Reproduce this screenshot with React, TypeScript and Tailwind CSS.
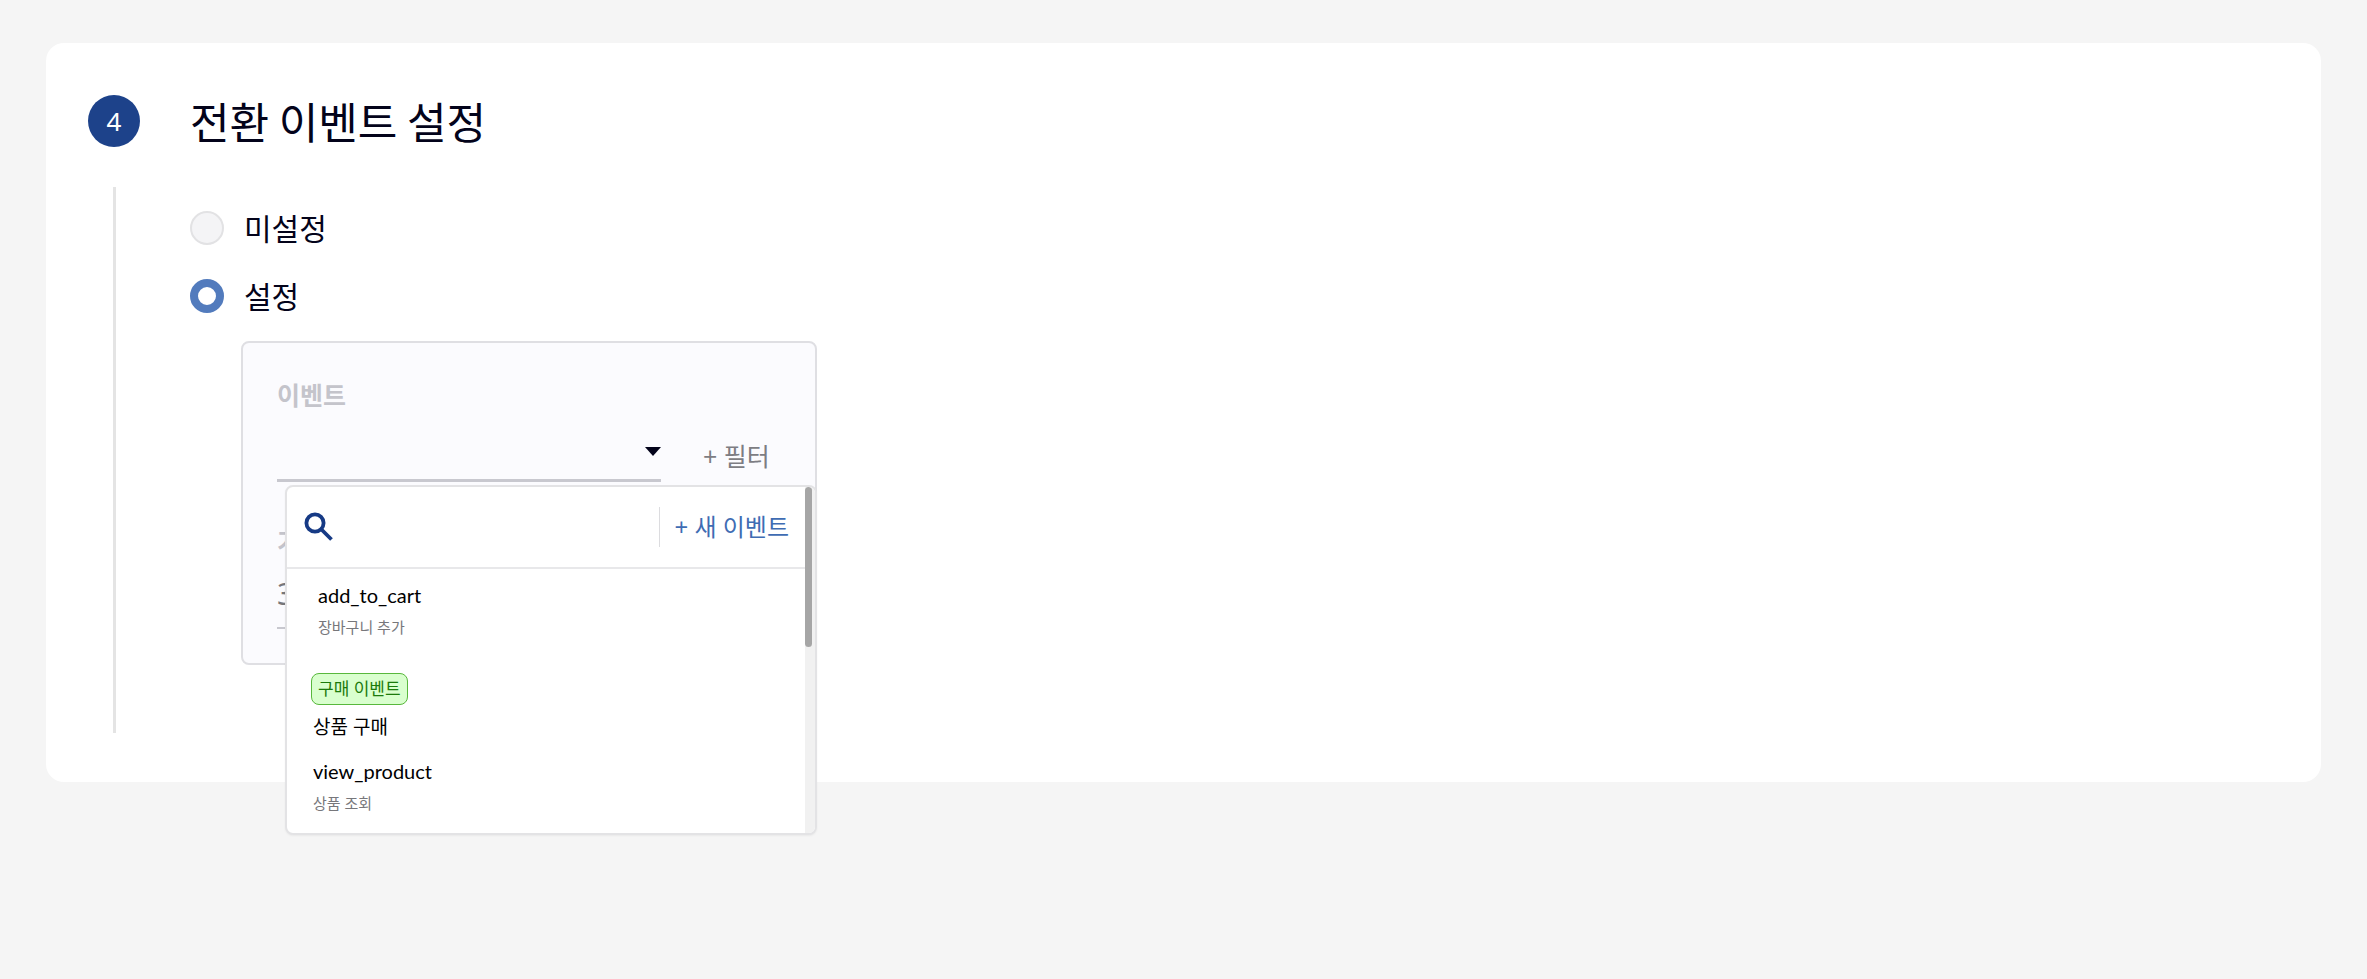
import { useState } from "react";

type EventItem = {
  name: string;
  description?: string;
  badge?: string;
};

const events: EventItem[] = [
  { name: "add_to_cart", description: "장바구니 추가" },
  { name: "상품 구매", badge: "구매 이벤트" },
  { name: "view_product", description: "상품 조회" },
];

const radioClass =
  "size-[34px] shrink-0 appearance-none rounded-full border-2 border-[#e2e2e4] bg-[#f4f4f6] checked:border-8 checked:border-[#527bbd] checked:bg-white";

const nameClass =
  "font-[Lato,'Noto_Sans_CJK_KR',sans-serif] text-[20px] leading-7 text-black";

function EventRow({ item, indent }: { item: EventItem; indent: boolean }) {
  if (item.badge) {
    return (
      <button type="button" className="flex flex-col items-start px-6 pt-[32px] text-left">
        <span className="flex h-8 items-center rounded-lg border border-[#58b83c] bg-[#d9ffce] px-[6px] text-[17px] text-[#1c7a0b]">
          {item.badge}
        </span>
        <span className="mt-2 pl-[2px] text-[19px] leading-7 text-black">{item.name}</span>
      </button>
    );
  }

  return (
    <button
      type="button"
      className={`flex flex-col items-start pr-6 text-left ${indent ? "pt-3 pl-[31px]" : "pt-4 pl-[26px]"}`}
    >
      <span className={nameClass}>{item.name}</span>
      <span className="mt-1 text-[15px] leading-7 text-[#77777b]">{item.description}</span>
    </button>
  );
}

function EventDropdown() {
  return (
    <div className="absolute top-[142px] -right-[2px] left-[42px] z-10 flex h-[350px] overflow-hidden rounded-lg border-2 border-[#e3e3e5] bg-white shadow-xs">
      <div className="flex min-w-0 flex-1 flex-col">
        {/* SEARCH */}
        <div className="flex h-[82px] shrink-0 items-center border-b-2 border-[#e8e8ea] pl-4">
          <label htmlFor="event-search" className="shrink-0">
            <svg width="32" height="32" viewBox="0 0 32 32" fill="none" stroke="#163a85" strokeWidth="3.8">
              <circle cx="12" cy="12" r="8.6" />
              <path d="M18 18 28.5 28.5" />
            </svg>
          </label>
          <input
            id="event-search"
            type="text"
            aria-label="이벤트 검색"
            className="h-10 min-w-0 flex-1 px-2 text-xl outline-none"
          />
          <button
            type="button"
            className="flex h-10 shrink-0 items-center border-l border-[#dcdcdf] pr-4 pl-[14px] text-2xl whitespace-nowrap text-[#3f6cb3]"
          >
            + 새 이벤트
          </button>
        </div>

        {/* LIST */}
        <div className="flex flex-col">
          {events.map((item, i) => (
            <EventRow key={item.name} item={item} indent={i === 0} />
          ))}
        </div>
      </div>

      {/* SCROLLBAR */}
      <div className="w-[10px] shrink-0 bg-[#f1f1f1]">
        <div className="h-[160px] w-[7px] rounded-full bg-[#a6a6a6]" />
      </div>
    </div>
  );
}

export default function App() {
  const [mode, setMode] = useState("set");

  return (
    <main className="min-h-screen bg-[#f5f5f5] px-[46px] pt-[43px] font-['Noto_Sans','Noto_Sans_CJK_KR',sans-serif] text-[#03031a]">
      <section className="flex gap-[50px] rounded-[18px] bg-white pt-[52px] pb-[49px] pl-[42px]">
        {/* STEP */}
        <div className="flex flex-col items-center gap-10">
          <span className="flex size-[52px] items-center justify-center rounded-full bg-[#1d428a] text-[26px] text-white">
            4
          </span>
          <div className="w-[3px] flex-1 bg-[#e4e4e4]" />
        </div>

        <div className="pb-[68px]">
          <h2 className="font-['Noto_Sans_CJK_KR',sans-serif] text-[43px] leading-[50px]">전환 이벤트 설정</h2>

          {/* MODE */}
          <div className="mt-[58px] flex flex-col gap-[18px]">
            <label className="flex h-[50px] items-center gap-5 text-[30px]">
              <input
                type="radio"
                name="mode"
                className={radioClass}
                checked={mode === "unset"}
                onChange={() => setMode("unset")}
              />
              미설정
            </label>
            <label className="flex h-[50px] items-center gap-5 text-[30px]">
              <input
                type="radio"
                name="mode"
                className={radioClass}
                checked={mode === "set"}
                onChange={() => setMode("set")}
              />
              설정
            </label>
          </div>

          {/* EVENT */}
          <div className="relative mt-5 ml-[51px] h-[324px] w-[576px] rounded-lg border-2 border-[#dfdfe3] bg-[#fbfbfe] pt-[34px] pl-[34px]">
            <label htmlFor="event" className="block text-[25px] leading-9 font-bold text-[#c4c4cb]">
              이벤트
            </label>
            <div className="mt-[19px] flex items-center gap-[42px]">
              <div className="relative w-[384px]">
                <select
                  id="event"
                  className="block h-[50px] w-full appearance-none border-b-[3px] border-[#c8c8cf] bg-transparent text-2xl outline-none"
                />
                <svg className="pointer-events-none absolute top-[15px] right-0" width="16" height="9" viewBox="0 0 16 9">
                  <path d="M0 0h16L8 9z" fill="#03031a" />
                </svg>
              </div>
              <button type="button" className="text-[25px] whitespace-nowrap text-[#7d7d83]">
                + 필터
              </button>
            </div>
            <label htmlFor="period" className="mt-[41px] block text-[25px] leading-9 font-bold text-[#c4c4cb]">
              기간
            </label>
            <input
              id="period"
              type="text"
              defaultValue="30"
              className="mt-[8px] block h-[62px] w-24 border-b-2 border-[#c8c8cf] bg-transparent pb-2 text-[30px] text-[#77777b] outline-none"
            />
            <EventDropdown />
          </div>
        </div>
      </section>
    </main>
  );
}
